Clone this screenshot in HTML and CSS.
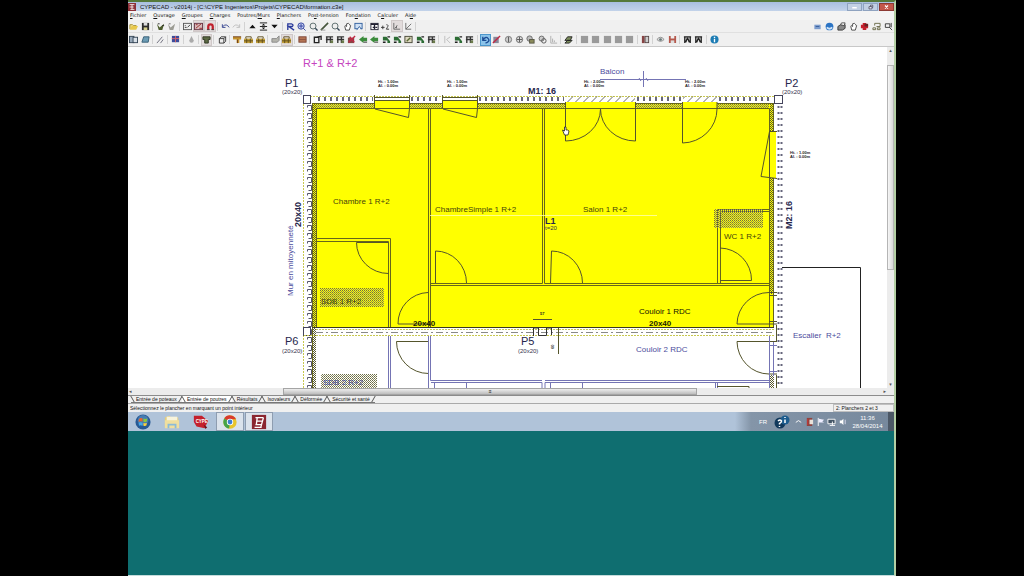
FILE: index.html
```html
<!DOCTYPE html>
<html lang="fr">
<head>
  <meta charset="UTF-8">
  <title>CYPECAD</title>
  <link rel="stylesheet" href="styles.css">
</head>
<body>

<div class="desktop">
  <div class="window">

    <header class="titlebar">
      <svg class="app-icon" viewBox="0 0 10 10"><rect width="10" height="10" fill="#8d3038"/><path d="M2 2h6M2 5h5M3 8h5M5 2v6" stroke="#fff" fill="none"/></svg>
      <h1>CYPECAD - v2014j - [C:\CYPE Ingenieros\Projets\CYPECAD\formation.c3e]</h1>
      <div class="win-buttons">
        <button type="button" class="win-btn" aria-label="Réduire"><svg viewBox="0 0 14 8"><path d="M4 5h6" stroke="#fff" stroke-width="2"/></svg></button>
        <button type="button" class="win-btn" aria-label="Restaurer"><svg viewBox="0 0 14 8"><path d="M5 3.500h4v3h-4zM7 3.500v-2h3v3h-1" stroke="#445" fill="#eef"/></svg></button>
        <button type="button" class="win-btn win-close" aria-label="Fermer"><svg viewBox="0 0 14 8"><path d="M5 2l4 4M9 2l-4 4" stroke="#fff" stroke-width="1.500"/></svg></button>
      </div>
    </header>

    <nav class="menubar">
      <a href="#"><u>F</u>ichier</a>
      <a href="#"><u>O</u>uvrage</a>
      <a href="#"><u>G</u>roupes</a>
      <a href="#"><u>C</u>harges</a>
      <a href="#">Poutres/<u>M</u>urs</a>
      <a href="#"><u>P</u>lanchers</a>
      <a href="#">Po<u>s</u>t-tension</a>
      <a href="#">Fon<u>d</u>ation</a>
      <a href="#">C<u>a</u>lculer</a>
      <a href="#">Ai<u>d</u>e</a>
    </nav>

    <div class="toolbar">
      <div class="tools tools-main" id="tools-main"></div>
      <div class="tools tools-side" id="tools-side"></div>
    </div>
    <div class="toolbar toolbar-second">
      <div class="tools tools-edit" id="tools-edit"></div>
    </div>

    <main class="workspace">
      <svg class="plan" viewBox="128 47 759 341">
        <defs>
          <pattern id="hatch" width="2" height="2" patternUnits="userSpaceOnUse">
            <rect width="1" height="1" fill="#5a5a30"/><rect x="1" y="1" width="1" height="1" fill="#5a5a30"/>
          </pattern>
          <pattern id="hatch-soft" width="2" height="2" patternUnits="userSpaceOnUse">
            <rect width="1" height="1" fill="#6c6c48"/><rect x="1" y="1" width="1" height="1" fill="#8c8c60"/>
          </pattern>
          <pattern id="bricks" x="304" y="104" width="8" height="8" patternUnits="userSpaceOnUse">
            <path d="M3.500 1.500h4v5h-3M3.500 1.500v2" fill="none" stroke="#55556c"/>
          </pattern>
          <pattern id="diag" x="566" y="96" width="8" height="7" patternUnits="userSpaceOnUse">
            <path d="M1 6.500l6-6" stroke="#555" stroke-width=".9"/>
          </pattern>
        </defs>

        <!-- slab -->
        <rect x="312" y="103" width="462" height="225" fill="#ffff00"/>

        <!-- outer walls -->
        <rect x="312" y="103" width="4" height="285" fill="url(#hatch)"/>
        <rect x="316" y="104" width="453" height="4" fill="url(#hatch-soft)"/>
        <rect x="770" y="104" width="4" height="190" fill="url(#hatch)"/>
        <rect x="770" y="375" width="4" height="13" fill="url(#hatch)"/>
        <g class="wall">
          <path d="M312 103.500H774M316 108.500H769.500V327M316.500 109V327M773.500 104V327M312.500 103V388"/>
        </g>
        <rect x="304" y="104" width="8" height="284" fill="url(#bricks)"/>
        <path class="guide" d="M303.500 104V388M310 96.500H775"/>

        <!-- supports -->
        <path class="dots" d="M318 99H373M411 99H441M479 99H564M637 99H682M719 99H772"/>
        <path class="dots dots-side" d="M778.500 106V388M781.500 106V388"/>
        <g class="box">
          <rect x="303.500" y="95.500" width="7" height="8"/>
          <rect x="774.500" y="95.500" width="8" height="8"/>
          <rect x="303.500" y="327.500" width="7" height="8"/>
        </g>

        <!-- openings in the top wall -->
        <g fill="#ffff00">
          <rect x="375" y="101" width="34" height="7"/>
          <rect x="443" y="101" width="34" height="7"/>
          <rect x="566" y="102" width="70" height="6"/>
          <rect x="683" y="102" width="34" height="6"/>
          <rect x="769" y="131" width="7" height="47"/>
        </g>
        <rect x="375" y="97" width="34" height="4" fill="#fff"/>
        <rect x="443" y="97" width="34" height="4" fill="#fff"/>
        <g class="line">
          <path d="M374.500 95v13M409.500 95v13M442.500 95v13M477.500 95v13M375 109l33.500 8.500 1-9M443 109l33.500 8.500 1-9"/>
          <path stroke="#8c8ca8" d="M375 97.500h34M375 100.500h34M443 97.500h34M443 100.500h34"/>
          <path d="M565.500 102v39a35 32 0 0 0 35-32a35 32 0 0 0 35 32v-39"/>
          <path d="M682.500 102v41a35 34 0 0 0 34.500-34v-7"/>
          <path d="M777 131.500h-7.500l-8.500 45 16 2M769.500 131v47"/>
        </g>
        <rect x="566" y="96" width="69" height="6" fill="url(#diag)"/>
        <rect x="683" y="96" width="34" height="6" fill="url(#diag)"/>

        <!-- partitions -->
        <g class="wall">
          <path d="M428.500 109V327M430.500 109V327M542.500 109V283.500H431M544.500 109V283.500H769M431 285.500H769"/>
          <path d="M316 238.500H390.500V327M316 241.500H388.500V327"/>
          <path d="M717.500 283V209.500H769M720.500 283V211.500H769"/>
        </g>
        <path d="M430 215.500H657" stroke="#ffffb0" stroke-width=".8"/>

        <!-- doors -->
        <g class="line">
          <path d="M388 242.500H356.500a32 31 0 0 0 32 31"/>
          <path d="M428 292.500a31 31 0 0 0-30 31.500h30"/>
          <path d="M435.500 283V251a31 32 0 0 1 31 32"/>
          <path d="M550.500 283L551.500 251a31 32 0 0 1 31 32"/>
          <path d="M720 248a32 32 0 0 1 31.500 32.500H720"/>
          <path d="M769 292.500a32 32 0 0 0-32 31.500h40M769 292.500h8M769 295.500h8M769 321.500h8"/>
          <path d="M428 341.500H396.500a32 32 0 0 0 32 32"/>
          <path d="M777 341.500H737a32 33 0 0 0 32 32.500h8M776.500 325v16"/>
        </g>

        <!-- beam between P6 and P5 -->
        <rect x="316" y="328" width="458" height="8" fill="#fff"/>
        <path d="M312 327.500H774" stroke="#3a3a20"/>
        <path class="guide" d="M316 329.500H774M304 335.500H774"/>
        <path d="M316 332.500H772" stroke="#888" stroke-dasharray="7 3 2 3"/>
        <path d="M533.500 336v-8h5v7.500h8V328h5v7" fill="none" stroke="#333"/>
        <path class="line" d="M533 319.500h19M558.500 328v26"/>

        <!-- lower floor -->
        <g class="blue-line">
          <path d="M388.500 336V388M390.500 336V388M428.500 336V388M430.500 336V380.500H542M545 380.500H769M431 382.500H542V388M545 388V382.500H769"/>
          <path d="M434.500 383v5M466.500 383v5M550.500 383v5M582.500 383v5M715.500 383v5M717.500 383v5"/>
          <path d="M769.500 336V388M773.500 342v34M769 345.500h8M769 371.500h8"/>
        </g>
        <path class="line" d="M717 386.500h32v2M776.500 375v13"/>
        <path d="M782 267.500H860.500V388" fill="none" stroke="#222"/>
        <rect x="320" y="288" width="64" height="19" fill="url(#hatch-soft)"/>
        <rect x="714" y="209" width="49" height="19" fill="url(#hatch-soft)"/>
        <rect x="321" y="374" width="56" height="14" fill="url(#hatch-soft)"/>

        <!-- balcony mark -->
        <path class="blue-line" d="M600 79.500H686M643.500 71v16M639 78l2 3M646 78l2 3"/>

        <!-- labels -->
        <text class="storey" x="303" y="67">R+1 &amp; R+2</text>
        <g class="pillar">
          <text x="285" y="87">P1</text>
          <text x="785" y="87">P2</text>
          <text x="285" y="345">P6</text>
          <text x="521" y="345">P5</text>
        </g>
        <g class="section">
          <text x="282" y="94">(20x20)</text>
          <text x="782" y="94">(20x20)</text>
          <text x="282" y="353">(20x20)</text>
          <text x="518" y="353">(20x20)</text>
          <text x="545" y="230">t=20</text>
        </g>
        <g class="beam">
          <text x="528" y="94">M1: 16</text>
          <text x="545" y="224">L1</text>
          <text transform="translate(301 227) rotate(-90)">20x40</text>
          <text transform="translate(792 229) rotate(-90)">M2: 16</text>
        </g>
        <g class="beam beam-dark">
          <text x="413" y="326">20x40</text>
          <text x="649" y="326">20x40</text>
        </g>
        <g class="room">
          <text x="333" y="204">Chambre 1 R+2</text>
          <text x="435" y="212">ChambreSimple 1 R+2</text>
          <text x="583" y="212">Salon 1 R+2</text>
          <text x="724" y="239">WC 1 R+2</text>
          <text x="321" y="304">SDB 1 R+2</text>
          <text class="strong" x="639" y="314">Couloir 1 RDC</text>
        </g>
        <g class="room room-blue">
          <text x="600" y="74">Balcon</text>
          <text x="636" y="352">Couloir 2 RDC</text>
          <text x="793" y="338">Escalier  R+2</text>
          <text x="323" y="385">SDB 2 R+2</text>
          <text transform="translate(293 296) rotate(-90)">Mur en mitoyenneté</text>
        </g>
        <g class="note">
          <text x="378" y="83">Ht. : 1.00m</text><text x="378" y="87">Al. : 0.00m</text>
          <text x="447" y="83">Ht. : 1.00m</text><text x="447" y="87">Al. : 0.00m</text>
          <text x="584" y="83">Ht. : 2.00m</text><text x="584" y="87">Al. : 0.00m</text>
          <text x="685" y="83">Ht. : 2.00m</text><text x="685" y="87">Al. : 0.00m</text>
          <text x="790" y="154">Ht. : 1.00m</text><text x="790" y="158">Al. : 0.00m</text>
          <text x="540" y="315">57</text>
          <text transform="translate(554 349) rotate(-90)">60</text>
        </g>

        <!-- hand cursor -->
        <path d="M564.500 127v4l-2-1 2 5h3.500l1-4-1.500-1h-1.500v-3z" fill="#fff" stroke="#222" stroke-width=".8"/>
      </svg>
      <div class="scroll-v"><span class="arrow">▴</span><div class="thumb-v"></div><span class="arrow">▾</span></div>
    </main>
    <div class="scroll-h"><span class="arrow">◂</span><div class="track-h"><div class="thumb-h">≡</div></div><span class="arrow">▸</span></div>

    <nav class="tabs">
      <a href="#">Entrée de poteaux</a>
      <a href="#" class="current">Entrée de poutres</a>
      <a href="#">Résultats</a>
      <a href="#">Isovaleurs</a>
      <a href="#">Déformée</a>
      <a href="#">Sécurité et santé</a>
    </nav>

    <footer class="statusbar">
      <span>Sélectionnez le plancher en marquant un point intérieur</span>
      <span class="floor">2: Planchers 2 et 3</span>
    </footer>
  </div>

  <div class="taskbar">
    <button type="button" class="task" aria-label="Démarrer">
      <svg viewBox="0 0 18 18"><circle cx="9" cy="9" r="8.500" fill="#285a94"/><circle cx="9" cy="7" r="6" fill="#5c93c4" opacity=".6"/><path d="M4.500 5.500q2-1.500 4-.5v3.500q-2-1-4.500.3z" fill="#e8662c"/><path d="M9.500 5.200q2 1 4.300 0l-.6 3.500q-2 .9-3.700 0z" fill="#8cc63e"/><path d="M4 9.800q2.300-1 4.500 0v3.500q-2-1.200-4 0z" fill="#45a8e8"/><path d="M9.500 10q2 .8 3.900 0l-.6 3q-1.500 1-3.300.2z" fill="#fbd13a"/></svg>
    </button>
    <button type="button" class="task" aria-label="Explorateur">
      <svg viewBox="0 0 18 18"><path d="M1 4l5-2 2 2h8v11H1z" fill="#e4cd7c"/><path d="M3 3h12v7H3z" fill="#f7f3dc"/><path d="M1 7h16v9H1z" fill="#f0df9e"/><path d="M5 16v-4h8v4" fill="none" stroke="#8bbbd8" stroke-width="2"/></svg>
    </button>
    <button type="button" class="task" aria-label="CYPE">
      <svg viewBox="0 0 18 18"><path d="M1 2l9 0 7 6-4 8-9-2-3-5z" fill="#c4202c"/><text x="3" y="10" font-size="5" font-weight="bold" fill="#fff">CYPE</text><path d="M12 12l4 3-2 2z" fill="#6a1018"/></svg>
    </button>
    <button type="button" class="task task-open" aria-label="Chrome">
      <svg viewBox="0 0 18 18"><circle cx="9" cy="9" r="7.500" fill="#e8c52c"/><path d="M9 9L2.500 5.200A7.500 7.500 0 0 1 15.800 6H9z" fill="#d83a2e"/><path d="M9 9l-6.500-3.800A7.500 7.500 0 0 0 8 16.400z" fill="#46a34a"/><circle cx="9" cy="9" r="3.600" fill="#fff"/><circle cx="9" cy="9" r="2.700" fill="#3f7fd0"/></svg>
    </button>
    <button type="button" class="task task-open" aria-label="CYPECAD">
      <svg viewBox="0 0 18 18"><rect x="1" y="1" width="16" height="16" fill="#8b2630"/><path d="M5 4h9M6 8h7M5 12h7M4 15h8M7 4l-1 8M14 4l-3 11" stroke="#fff" stroke-width="1.500" fill="none"/></svg>
    </button>

    <div class="tray">
      <span class="lang">FR</span>
      <svg class="tray-help" viewBox="0 0 16 16"><circle cx="6" cy="9" r="5.500" fill="#12395c"/><circle cx="11" cy="6" r="4.500" fill="#1d5c8e"/><path d="M4 7q2-2 3.500 0q0 1.500-2 2.500v1M5.500 12v1M11 3v1M11 5.500V9" stroke="#fff" stroke-width="1.500" fill="none"/></svg>
      <svg class="tray-icon" viewBox="0 0 10 10"><path d="M2 6l3-2 3 2" stroke="#fff" fill="none"/></svg>
      <svg class="tray-icon" viewBox="0 0 10 10"><rect x="2" y="1" width="6" height="9" fill="#8d4440"/><path d="M5 3h4v5H5z" fill="#e9e2da"/><path d="M3 2v7" stroke="#c33"/></svg>
      <svg class="tray-icon" viewBox="0 0 10 10"><path d="M2.500 1v9" stroke="#fff"/><path d="M3 2l6 1-2 2 2 1H3z" fill="#eef"/></svg>
      <svg class="tray-icon" viewBox="0 0 10 10"><path d="M1 2.500h8v5H1zM3 9.500h6M6 5v4" stroke="#fff" fill="#456"/></svg>
      <svg class="tray-icon" viewBox="0 0 10 10"><path d="M2 4h2l2-2v7L4 7H2z" fill="#fff"/><path d="M8 3v5" stroke="#dde"/></svg>
      <div class="clock"><span>11:36</span><span>28/04/2014</span></div>
      <button type="button" class="show-desktop" aria-label="Afficher le bureau"></button>
    </div>
  </div>
</div>

<script src="toolbar.js"></script>
</body>
</html>
```

FILE: styles.css
```css
* {
  box-sizing: border-box;
}

body {
  margin: 0;
  background: #000;
  font-family: "Liberation Sans", Arial, sans-serif;
  font-size: 5px;
  line-height: 8px;
  color: #111;
}

button {
  padding: 0;
  border: 0;
  background: none;
  font: inherit;
}

a {
  color: inherit;
  text-decoration: none;
}

svg {
  display: block;
}

.desktop {
  display: flex;
  flex-direction: column;
  width: 75%;
  height: 100vh;
  margin: 0 auto;
  background: #0f6e70;
  border-top: 2px solid #55793a;
  border-bottom: 1px solid #c5dcdc;
  border-right: 2px solid #b4cfa4;
}

.window {
  background: #f0f0f0;
}

/* title bar */
.titlebar {
  display: flex;
  align-items: center;
  gap: 4px;
  height: 9px;
  background: linear-gradient(#a9bfe0, #c3d3ea);
}

.app-icon {
  width: 8px;
  height: 8px;
}

.titlebar h1 {
  flex: 1;
  margin: 0;
  font-size: 6px;
  font-weight: normal;
}

.win-buttons {
  display: flex;
  gap: 1px;
}

.win-btn {
  width: 15px;
  height: 8px;
  border: 1px solid #8fa3c0;
  background: #c2d0e4;
}

.win-btn svg {
  width: 100%;
  height: 100%;
}

.win-close {
  background: #c4574a;
  border-color: #8d3a34;
}

/* menu */
.menubar {
  display: flex;
  gap: 7px;
  height: 9px;
  padding: 0 2px;
  background: #f4f4f4;
  font-family: "DejaVu Sans", sans-serif;
}

/* toolbars */
.toolbar {
  display: flex;
  justify-content: space-between;
  height: 13px;
  border-bottom: 1px solid #e0e0e0;
}

.toolbar-second {
  height: 14px;
  border-bottom: 1px solid #c8c8c8;
}

.tools {
  display: flex;
  align-items: center;
}

.tools-main {
  flex: 0 1 290px;
}

.tools-side {
  flex: 0 1 82px;
}

.tools-edit {
  flex: 0 1 592px;
}

.tool {
  display: flex;
  flex: 1;
  justify-content: center;
  align-items: center;
  height: 12px;
}

.tool svg {
  width: 9px;
  height: 9px;
}

.tool.on {
  background: #e2dcdc;
  outline: 1px solid #cfc8c8;
  outline-offset: -1px;
}

.tool.active {
  background: #8cc4ea;
  outline: 1px solid #4c97cc;
  outline-offset: -1px;
}

.sep {
  flex: 0 0 4px;
  height: 9px;
  border-left: 1px solid #d2d2d2;
  margin-left: 1px;
  margin-right: -1px;
}

/* drawing */
.workspace {
  display: flex;
  background: #fff;
}

.plan {
  flex: 1;
  min-width: 0;
}

.plan text {
  white-space: pre;
}

.wall path {
  fill: none;
  stroke: #66661c;
}

.line,
.line path {
  fill: none;
  stroke: #55552c;
}

.blue-line,
.blue-line path {
  fill: none;
  stroke: #7474b4;
}

.box rect {
  fill: #fff;
  stroke: #44445c;
}

.guide {
  fill: none;
  stroke: #c8c850;
  stroke-dasharray: 2 1;
}

.dots {
  fill: none;
  stroke: #66667c;
  stroke-width: 4;
  stroke-dasharray: 2 4;
}

.dots-side {
  stroke-width: 2;
}

.storey {
  font-size: 11px;
  fill: #c544c0;
}

.pillar {
  font-size: 11px;
  fill: #26264c;
}

.section {
  font-size: 6px;
  fill: #33334c;
}

.beam {
  font-size: 9px;
  font-weight: bold;
  fill: #26264c;
}

.beam-dark {
  font-size: 8px;
  fill: #222200;
}

.room {
  font-size: 8px;
  fill: #44440c;
}

.room .strong {
  fill: #111100;
}

.room-blue {
  fill: #4c4c9c;
}

.note {
  font-size: 4px;
  font-weight: bold;
  fill: #222;
}

/* scroll bars */
.arrow {
  font-family: "DejaVu Sans", sans-serif;
  font-size: 5px;
  line-height: 7px;
  text-align: center;
  color: #555;
}

.scroll-v {
  display: flex;
  flex-direction: column;
  flex: 0 0 7px;
  background: #ececec;
}

.scroll-v .arrow:last-child {
  margin-top: auto;
}

.thumb-v {
  height: 60%;
  margin-top: 11px;
  border: 1px solid #b5b5b5;
  background: linear-gradient(90deg, #f6f6f6, #d8d8d8);
}

.scroll-h {
  display: flex;
  height: 8px;
  padding: 0 8px 0 1px;
  background: #ececec;
  border-bottom: 1px solid #8c8c8c;
}

.track-h {
  flex: 1;
  padding-left: 20%;
}

.thumb-h {
  width: 69%;
  height: 7px;
  border: 1px solid #a5a5a5;
  background: linear-gradient(#eee, #bdbdbd);
  line-height: 5px;
  text-align: center;
}

/* view tabs */
.tabs {
  display: flex;
  height: 8px;
  padding-left: 3px;
  border-bottom: 1px solid #aaa;
  line-height: 7px;
}

.tabs a {
  position: relative;
  padding: 0 5px;
  border-bottom: 1px solid #777;
}

/* slanted tab edges */
.tabs a::before,
.tabs a::after {
  content: "";
  position: absolute;
  top: 0;
  bottom: 0;
  left: 1px;
  border-left: 1px solid #555;
  transform: skewX(30deg);
}

.tabs a::after {
  left: auto;
  right: 1px;
  transform: skewX(-30deg);
}

.tabs .current {
  background: #fff;
}

.statusbar {
  display: flex;
  justify-content: space-between;
  height: 8px;
  padding-left: 2px;
}

.floor {
  width: 61px;
  padding-left: 2px;
  border: 1px solid #c0c0c0;
  line-height: 7px;
}

/* task bar */
.taskbar {
  display: flex;
  height: 19px;
  padding-left: 1px;
  background: #b0c3d9;
}

.task {
  display: flex;
  justify-content: center;
  align-items: center;
  width: 28px;
  margin-right: 1px;
}

.task svg {
  width: 16px;
  height: 16px;
}

.task-open {
  border: 1px solid #8e9db0;
  background: #dbe3ec;
}

.tray {
  display: flex;
  align-items: center;
  gap: 2px;
  margin-left: auto;
  padding-left: 24px;
  background: linear-gradient(90deg, #b0c3d9, #8495a8 16px, #76889c);
  color: #fff;
}

.lang {
  margin-right: 5px;
  font-size: 6px;
}

.tray-help {
  width: 16px;
  height: 16px;
  margin-right: 2px;
}

.tray-icon {
  width: 9px;
  height: 9px;
}

.clock {
  display: flex;
  flex-direction: column;
  align-items: center;
  width: 37px;
}

.clock span {
  font-size: 6px;
}

.show-desktop {
  width: 6px;
  height: 19px;
  background: #4c5866;
}
```

FILE: toolbar.js
```js
// icons are drawn on a 10x10 grid
const icons = {
  open: '<path d="M1 8V3h3l1 1h3v1" fill="#f4e08a" stroke="#a38b2c"/><path d="M1 8.500l2-4h7l-2 4z" fill="#e8c84c"/>',
  save: '<rect x="1" y="1" width="8" height="8" fill="#2c2c2c"/><rect x="3" y="1" width="4" height="3" fill="#ddd"/><rect x="3" y="6" width="4" height="3" fill="#d6d08c"/>',
  tree: '<path d="M1 2l3 4 5-4-2 7H3z" fill="#4c5c2c"/><path d="M2 2h2M7 4h2" stroke="#222"/>',
  treeGray: '<path d="M1 2l3 4 5-4-2 7H3z" fill="#9c9c94"/><path d="M2 2h2" stroke="#666"/>',
  dxf: '<rect x=".5" y="1.500" width="9" height="7" fill="#eee" stroke="#555"/><path d="M2 6h2M5 6l3-3M2 4h1" stroke="#333"/>',
  dxfRed: '<rect x=".5" y="1.500" width="9" height="7" fill="#d8bcbc" stroke="#634"/><path d="M2 7l6-5M2 3h2M6 7h3" stroke="#922"/>',
  magnet: '<path d="M2.500 9V5a2.500 2.500 0 0 1 5 0v4" fill="none" stroke="#c0202c" stroke-width="2.500"/><path d="M1 8.500h3M6 8.500h3" stroke="#444"/>',
  undo: '<path d="M2 5q4-4 7 1M1.500 2.500V6H5" fill="none" stroke="#2c3c8c"/>',
  redo: '<path d="M8 5q-4-4-7 1M8.500 2.500V6H5" fill="none" stroke="#bbb"/>',
  up: '<path d="M1.500 7l3.500-4 3.500 4z" fill="#111"/>',
  updown: '<path d="M1 5h8M1 1h8M1 9h8" stroke="#111"/><path d="M3 4l2-2 2 2zM3 6l2 2 2-2z" fill="#111"/>',
  down: '<path d="M1.500 3l3.500 4 3.500-4z" fill="#111"/>',
  redraw: '<path d="M2 9V2h4q3 1 1 3H3l6 4" fill="none" stroke="#2c3c9c" stroke-width="1.500"/>',
  zoomBlue: '<circle cx="4.500" cy="4.500" r="3.500" fill="#ccd6f4" stroke="#2c3c9c"/><path d="M7 7l2.500 2.500M2 4.500h5M4.500 2v5" stroke="#2c3c9c"/>',
  zoom: '<circle cx="4.500" cy="4.500" r="3.300" fill="#eee" stroke="#566"/><path d="M7 7l2.500 2.500" stroke="#345" stroke-width="1.500"/>',
  pencil: '<path d="M1 9l5-5 3-3" stroke="#46563c" stroke-width="1.800"/><path d="M1 9h5" stroke="#999"/>',
  hand: '<path d="M2 5l1 4h4l1.500-5-1-.5V3L6 1.500 4 2v3L2.500 4z" fill="#fff" stroke="#444"/>',
  windows: '<rect x="1" y="1.500" width="8" height="6" fill="#cfe0f4" stroke="#2c5c9c"/><path d="M3 9l3-4 2 3" stroke="#2c5c9c" fill="#fff"/>',
  table: '<rect x="1" y="1.500" width="8" height="7" fill="#fff" stroke="#223"/><path d="M1 2.500h8M3 6h1.500M6 6h2M5 3v5" stroke="#223" stroke-width="1.500"/>',
  dist: '<path d="M0 6h4M2 4v4M6 3q3 0 1 3l-1 2h3" fill="none" stroke="#333"/>',
  axes: '<path d="M2 1v7h7M3 7l3-3M5 7V4" fill="none" stroke="#666"/>',
  axis: '<path d="M2 1v7h6M2 8l6-6" fill="none" stroke="#666"/>',
  copy: '<rect x=".5" y="1.500" width="5" height="7" fill="#9ab" stroke="#345"/><rect x="4.500" y="2.500" width="5" height="6" fill="#d8e0e8" stroke="#345"/>',
  slabBlue: '<path d="M1 8l2-6h6L8 8z" fill="#6c9cb4" stroke="#345c74"/>',
  line: '<path d="M1 9l6-7M5 9l3-4" stroke="#667"/>',
  grid: '<rect x="1" y="1" width="8" height="7" fill="#3c4c9c"/><path d="M1 4h8M5 1v7" stroke="#d66"/>',
  drop: '<path d="M5 1l2.500 5a2.500 2.500 0 0 1-5 0z" fill="#aaa"/>',
  beam: '<path d="M1 2h8v3H7v4H3V5H1z" fill="#5c6a44" stroke="#2c3420"/>',
  layers: '<path d="M1 6l3-4h5L7 6zM1 9l3-3h5L6 9z" fill="#7c8c5c" stroke="#222"/>',
  cube: '<path d="M1.500 4l2-2h5v5l-2 2h-5zM1.500 4h5v5M6.500 4l2-2" fill="#eee" stroke="#333"/>',
  brick: '<path d="M0 2h9v3H7v4H4V5H0z" fill="#c4922c"/><path d="M0 2h9M5 5v4" stroke="#6c3c1c"/>',
  bricks: '<rect x="0" y="4" width="10" height="5" fill="#c4a03c"/><path d="M2 4V2h6v2M0 6.500h10M3 4v5M7 4v5" stroke="#5c4c1c" fill="none"/>',
  gray: '<path d="M1 8V4h5l3-3v5L7 8z" fill="#b4b4ac" stroke="#888"/>',
  plan: '<rect x="1" y="2" width="8" height="6" fill="#b47454" stroke="#7c4434"/><path d="M1 5h8" stroke="#8c5440"/>',
  frame: '<path d="M1.500 8.500v-6h5v6zM4 2.500l5-1v4" fill="#eee" stroke="#222" stroke-width="1.500"/>',
  frames: '<path d="M1 2h8M1 5h8M2 2v7M6 2v7" stroke="#333" stroke-width="1.500"/><rect x="6" y="6" width="3" height="3" fill="#6c7c4c"/>',
  frameRed: '<rect x="1" y="3" width="7" height="6" fill="#844"/><path d="M2 8l7-7M3 2l5 6" stroke="#c02844" stroke-width="1.500"/>',
  green: '<path d="M0 5l5-4v2h4v4H5v2z" fill="#3c8c3c"/><path d="M5 8h4" stroke="#333"/>',
  greenDark: '<path d="M1 2h4l4 5v2H6V6H1z" fill="#2c6c34"/><path d="M1 8h3M6 2h3" stroke="#222" stroke-width="1.500"/>',
  box: '<rect x="1" y="1.500" width="8" height="7" fill="#ddd8c0" stroke="#443"/><path d="M3 7l4-4" stroke="#5a6a34" stroke-width="1.500"/>',
  off: '<path d="M2 1v8M8 2L4 5l4 4" stroke="#bbb" fill="none"/>',
  turn: '<path d="M2 2v4h4M2.500 5q3-4 5.500-1t-3 5" fill="none" stroke="#1c4c94" stroke-width="1.500"/>',
  slash: '<rect x="1.500" y="2" width="6" height="7" fill="#889"/><path d="M1 9l8-8" stroke="#c02844" stroke-width="1.500"/>',
  ring: '<circle cx="5" cy="5" r="3.500" fill="#ccc" stroke="#777"/><path d="M5 2v6" stroke="#555"/>',
  ringCross: '<circle cx="5" cy="5" r="3.500" fill="#ddd" stroke="#666"/><path d="M5 2v6M2 5h6" stroke="#555"/>',
  rings: '<circle cx="4" cy="4" r="3" fill="#bbb" stroke="#666"/><rect x="4" y="5" width="5" height="4" fill="#8a8a5a" stroke="#554"/>',
  ringPair: '<circle cx="4" cy="4" r="2.800" fill="#ccc" stroke="#666"/><circle cx="6.500" cy="6.500" r="2.500" fill="none" stroke="#555"/>',
  chart: '<path d="M2 1v8h7M4 8V4M6 8V6" stroke="#aaa" fill="none"/>',
  block: '<rect x="1" y="1" width="8" height="8" fill="#9a9a9a"/>',
  book: '<rect x="1" y="1" width="3" height="8" fill="#844"/><rect x="4.500" y="1.500" width="4" height="7" fill="#ccc" stroke="#544"/>',
  eye: '<path d="M1 5q4-5 8 0q-4 4-8 0z" fill="#ddd" stroke="#888"/><circle cx="5" cy="5" r="1.500" fill="#677"/>',
  castle: '<path d="M1 1h2v3h4V1h2v8H1z" fill="#b4584c"/><path d="M3 9V6h4v3" fill="#ddd"/>',
  text: '<path d="M1 2h8M2 2v7M8 2v7M5 3l-2 5M5 3l2 5" stroke="#222" stroke-width="1.500"/>',
  info: '<circle cx="5" cy="5" r="4.500" fill="#1c7cb4"/><path d="M5 2v1.500M5 4.500V8" stroke="#fff" stroke-width="1.500"/>',
  globe: '<circle cx="5" cy="5" r="4.300" fill="#2c74c4"/><path d="M2 6q3 3 6 0" stroke="#cfe4f8" stroke-width="2" fill="none"/>',
  globeSmall: '<rect x="1.500" y="3" width="7" height="5" fill="#7c9ccc"/><path d="M3 5h4" stroke="#345c9c"/>',
  printer: '<path d="M1 5l3-2h5v4L6 9H1z" fill="#888" stroke="#333"/><path d="M4 3l1-2h4L8 4z" fill="#fff" stroke="#444"/>',
  redCross: '<path d="M3 1h4v2h2v4H7v2H3V7H1V3h2z" fill="#c4202c"/><rect x="5" y="2" width="4" height="3" fill="#622"/>',
  screens: '<path d="M3 4V1.500h6V5H5M1 6.500h3v2H1zM6 6.500h3v2H6z" fill="none" stroke="#664"/>',
  exit: '<path d="M1.500 2v4h5V2zM6 6l3 3M8 1v5" fill="none" stroke="#333"/>'
};

// "|" starts a new group, "+" marks a pressed button, "*" the running command
const bars = {
  'tools-main': 'open save | tree treeGray | dxf dxfRed+ magnet+ | undo redo | up updown down | redraw zoomBlue zoom pencil zoom hand windows | table dist axes+ axis |',
  'tools-side': 'globeSmall globe printer hand redCross screens exit',
  'tools-edit': 'copy slabBlue | line | grid | drop | beam+ | cube | brick bricks bricks | gray bricks+ | plan | frame frames frames frameRed green green greenDark greenDark box greenDark frames | off greenDark frames | turn* slash ring ringCross rings ringPair chart | layers | block block block block block | book | eye castle | text text | info'
};

for (const id in bars) {
  document.getElementById(id).innerHTML = bars[id].split(' ').map(item => {
    if (item === '|') return '<span class="sep"></span>';
    const name = item.replace(/[+*]/, '');
    const state = item.endsWith('+') ? ' on' : item.endsWith('*') ? ' active' : '';
    return `<button type="button" class="tool${state}" aria-label="${name}"><svg viewBox="0 0 10 10">${icons[name]}</svg></button>`;
  }).join('');
}
```
